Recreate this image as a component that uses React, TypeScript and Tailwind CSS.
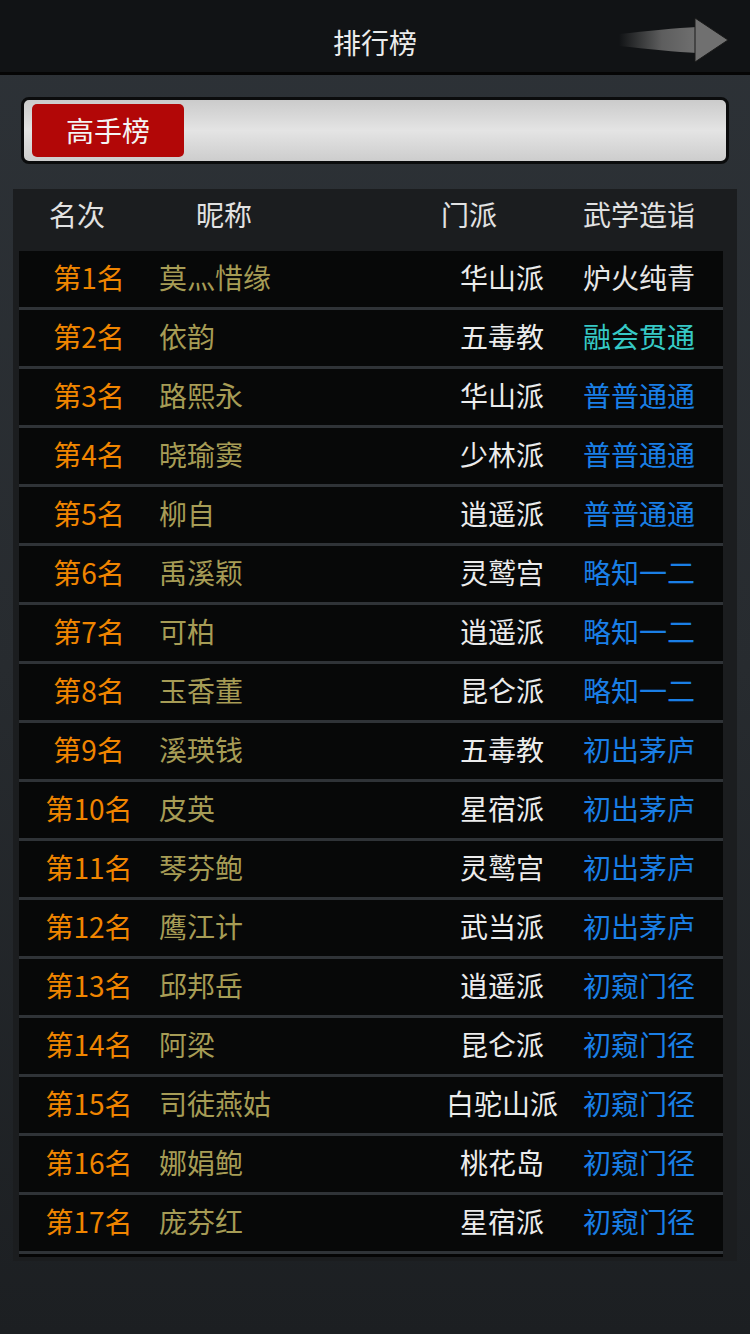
const rows = [
  { rank: 1, name: '莫灬惜缘', sect: '华山派', level: '炉火纯青' },
  { rank: 2, name: '依韵', sect: '五毒教', level: '融会贯通' },
  { rank: 3, name: '路熙永', sect: '华山派', level: '普普通通' },
  { rank: 4, name: '晓瑜窦', sect: '少林派', level: '普普通通' },
  { rank: 5, name: '柳自', sect: '逍遥派', level: '普普通通' },
  { rank: 6, name: '禹溪颖', sect: '灵鹫宫', level: '略知一二' },
  { rank: 7, name: '可柏', sect: '逍遥派', level: '略知一二' },
  { rank: 8, name: '玉香董', sect: '昆仑派', level: '略知一二' },
  { rank: 9, name: '溪瑛钱', sect: '五毒教', level: '初出茅庐' },
  { rank: 10, name: '皮英', sect: '星宿派', level: '初出茅庐' },
  { rank: 11, name: '琴芬鲍', sect: '灵鹫宫', level: '初出茅庐' },
  { rank: 12, name: '鹰江计', sect: '武当派', level: '初出茅庐' },
  { rank: 13, name: '邱邦岳', sect: '逍遥派', level: '初窥门径' },
  { rank: 14, name: '阿梁', sect: '昆仑派', level: '初窥门径' },
  { rank: 15, name: '司徒燕姑', sect: '白驼山派', level: '初窥门径' },
  { rank: 16, name: '娜娟鲍', sect: '桃花岛', level: '初窥门径' },
  { rank: 17, name: '庞芬红', sect: '星宿派', level: '初窥门径' },
];

// 武学造诣 colour by tier
const levelColor = (level: string) => {
  if (level === '炉火纯青') return 'text-[#e6e6e6]';
  if (level === '融会贯通') return 'text-[#36c9c6]';
  return 'text-[#1a7fe6]';
};

const NextArrow = () => (
  <svg width="112" height="46" viewBox="0 0 112 46" className="absolute right-[21px] top-[17px]">
    <defs>
      <linearGradient id="tail" x1="0" y1="0" x2="1" y2="0">
        <stop offset="0%" stopColor="#6b6b6b" stopOpacity="0" />
        <stop offset="55%" stopColor="#6b6b6b" stopOpacity="0.85" />
        <stop offset="100%" stopColor="#707070" />
      </linearGradient>
    </defs>
    <path d="M2 17 C30 14 60 11 80 10 L80 36 C60 35 30 32 2 29 Z" fill="url(#tail)" />
    <path d="M78 1 L111 23 L78 45 Z" fill="#707070" stroke="#1a1a1a" strokeWidth="1" />
  </svg>
);

export default function App() {
  return (
    <div
      className="w-[750px] h-[1334px] bg-gradient-to-b from-[#2d3237] via-[#272b2f] to-[#1c1f22] overflow-hidden"
      style={{ fontFamily: '"Noto Sans CJK SC", "Noto Sans", sans-serif' }}
    >
      {/* 顶栏 */}
      <header className="relative h-[75px] bg-[#111315] border-b-[3px] border-[#050505] flex items-center justify-center">
        <h1 className="text-[28px] text-[#ececec] leading-none pt-[12px]">排行榜</h1>
        <NextArrow />
      </header>

      {/* 标签栏 */}
      <div className="mt-[22px] mx-[21px] h-[67px] rounded-[8px] border-[3px] border-[#0b0c0d] bg-gradient-to-b from-[#cbcbcb] via-[#e4e4e4] to-[#cdcdcd] flex items-center pl-[8px]">
        <div className="w-[152px] h-[53px] rounded-[5px] bg-[#b20707] flex items-center justify-center text-[28px] leading-none text-[#f4f4f4] pb-[2px]">
          高手榜
        </div>
      </div>

      {/* 榜单 */}
      <div className="mt-[25px] ml-[13px] w-[724px] bg-[#1b1d1f] pb-[4px]">
        <div className="h-[62px] flex items-center text-[28px] leading-none text-[#e2e2e2] pb-[12px]">
          <span className="w-[128px] text-center">名次</span>
          <span className="w-[166px] text-center">昵称</span>
          <span className="w-[124px]" />
          <span className="w-[76px] text-center">门派</span>
          <span className="pl-[76px]">武学造诣</span>
        </div>
        <div className="ml-[6px] w-[704px] flex flex-col gap-[3px] bg-[#2f3337] pb-[3px]">
          {rows.map((r) => (
            <div key={r.rank} className="h-[56px] bg-[#070808] grid grid-cols-[140px_278px_130px_1fr] items-center text-[28px] leading-none pb-[4px]">
              <span className="text-center text-[#f08500]">第{r.rank}名</span>
              <span className="text-[#a69c55]">{r.name}</span>
              <span className="text-center text-[#ececec]">{r.sect}</span>
              <span className={`pl-[16px] ${levelColor(r.level)}`}>{r.level}</span>
            </div>
          ))}
        </div>
        <div className="ml-[6px] w-[704px] h-[3px] bg-[#050505]" />
      </div>
    </div>
  );
}
